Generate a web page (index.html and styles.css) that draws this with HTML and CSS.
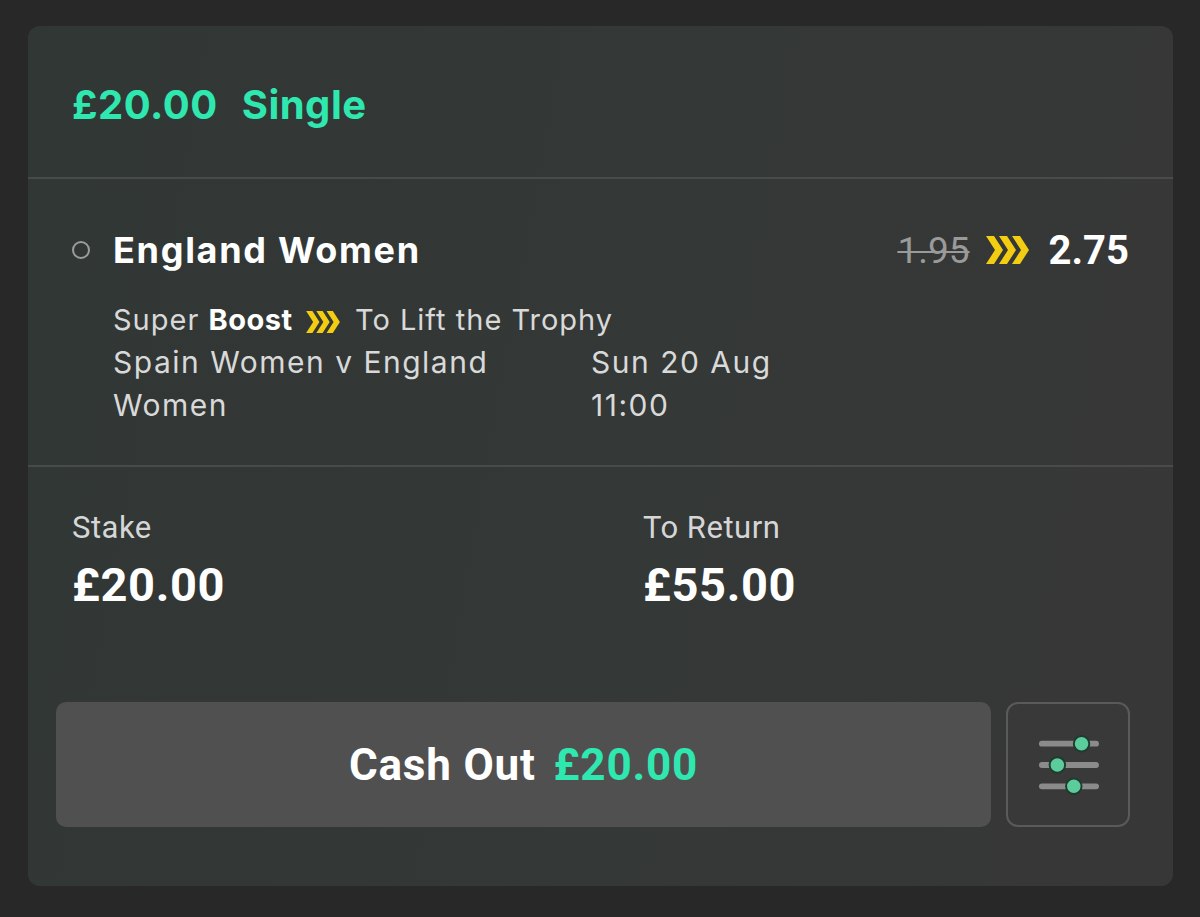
FILE: index.html
```html
<!DOCTYPE html>
<html lang="en">
<head>
<meta charset="utf-8">
<title>Bet</title>
<link rel="stylesheet" href="styles.css">
</head>
<body>
<div class="card">
  <div class="head">
    <span class="head-amount">£20.00</span>
    <span class="head-type">Single</span>
  </div>
  <div class="selection">
    <div class="sel-row">
      <span class="ring"></span>
      <span class="sel-name">England Women</span>
      <span class="odds">
        <span class="odds-old">1.95</span>
        <svg class="chev chev-lg" viewBox="0 0 43 28" aria-hidden="true">
          <polygon points="0,0 8,0 17,14 8,28 0,28 9,14"/>
          <polygon points="13,0 21,0 30,14 21,28 13,28 22,14"/>
          <polygon points="26,0 34,0 43,14 34,28 26,28 35,14"/>
        </svg>
        <span class="odds-new">2.75</span>
      </span>
    </div>
    <div class="details">
      <div class="boost">Super <b>Boost</b>
        <svg class="chev chev-sm" viewBox="0 0 43 28" aria-hidden="true">
          <polygon points="0,0 8,0 17,14 8,28 0,28 9,14"/>
          <polygon points="13,0 21,0 30,14 21,28 13,28 22,14"/>
          <polygon points="26,0 34,0 43,14 34,28 26,28 35,14"/>
        </svg>
        To Lift the Trophy</div>
      <div class="event">
        <div class="event-name">Spain Women v England Women</div>
        <div class="event-time">Sun 20 Aug<br>11:00</div>
      </div>
    </div>
  </div>
  <div class="totals">
    <div class="total">
      <div class="total-label">Stake</div>
      <div class="total-value">£20.00</div>
    </div>
    <div class="total">
      <div class="total-label">To Return</div>
      <div class="total-value">£55.00</div>
    </div>
  </div>
  <div class="actions">
    <button class="cashout">Cash Out <span class="cashout-amt">£20.00</span></button>
    <button class="settings" aria-label="Settings">
      <svg viewBox="0 0 124 124" width="124" height="124" aria-hidden="true">
        <g stroke="#8b8b8b" stroke-width="6" stroke-linecap="round">
          <line x1="35" y1="40" x2="91" y2="40"/>
          <line x1="35" y1="62" x2="91" y2="62"/>
          <line x1="35" y1="84" x2="91" y2="84"/>
        </g>
        <g fill="#5ccc9c" stroke="#1f3a2e" stroke-width="2">
          <circle cx="76" cy="40" r="8"/>
          <circle cx="51" cy="62" r="8"/>
          <circle cx="68" cy="84" r="8"/>
        </g>
      </svg>
    </button>
  </div>
</div>
</body>
</html>
```

FILE: styles.css
```css
* { box-sizing: border-box; }
html, body { margin: 0; padding: 0; }
body {
  background: #282828;
  font-family: "Inter", "Roboto", "Liberation Sans", sans-serif;
  width: 1200px;
  height: 917px;
  overflow: hidden;
}
.card {
  margin: 26px 27px 0 28px;
  height: 860px;
  border-radius: 12px;
  background: linear-gradient(100deg, #313735 0%, #343836 55%, #373737 100%);
  display: flex;
  flex-direction: column;
}
.head {
  height: 151px;
  display: flex;
  align-items: center;
  padding: 6px 44px 0;
  color: #2fe8b0;
  font-family: "Inter", sans-serif;
  font-weight: 700;
  font-size: 40px;
  letter-spacing: 0.5px;
  gap: 24px;
}
.selection {
  border-top: 2px solid #474c4a;
  border-bottom: 2px solid #474c4a;
  padding: 49px 44px 38px;
}
.sel-row {
  display: flex;
  align-items: center;
  height: 44px;
}
.ring {
  width: 18px;
  height: 18px;
  border: 2px solid #9c9c9c;
  border-radius: 50%;
  margin-right: 23px;
  flex: none;
}
.sel-name {
  color: #fff;
  font-family: "Inter", sans-serif;
  font-weight: 700;
  font-size: 36px;
  letter-spacing: 1.7px;
  flex: 1;
}
.odds {
  display: flex;
  align-items: center;
  gap: 16px;
  font-family: "Roboto", sans-serif;
}
.odds-old {
  color: #9a9a9a;
  font-size: 37px;
  text-decoration: line-through;
  text-decoration-thickness: 2px;
}
.odds-new {
  color: #fff;
  font-weight: 700;
  font-size: 40px;
  margin-left: 4px;
}
.chev polygon { fill: #f2cd12; }
.chev-lg { width: 43px; height: 28px; }
.chev-sm { width: 34px; height: 22px; vertical-align: -3px; margin: 0 6px 0 4px; }
.details {
  margin-left: 41px;
  margin-top: 26px;
  color: #d9d9d9;
  font-family: "Inter", sans-serif;
  font-size: 30px;
  letter-spacing: 1.5px;
  line-height: 43px;
}
.boost {
  font-size: 29px;
  letter-spacing: 1px;
}
.boost b { color: #fff; font-weight: 700; letter-spacing: 0.5px; }
.event {
  display: grid;
  grid-template-columns: 478px auto;
}
.event-name { width: 420px; }
.totals {
  display: grid;
  grid-template-columns: 571px auto;
  padding: 43px 44px 0;
  height: 235px;
  font-family: "Roboto", sans-serif;
}
.total-label {
  color: #d6d6d6;
  font-size: 31px;
  letter-spacing: 0.5px;
  line-height: 36px;
}
.total-value {
  color: #fff;
  font-weight: 700;
  font-size: 47px;
  letter-spacing: 0.6px;
  line-height: 50px;
  margin-top: 14px;
}
.actions {
  display: flex;
  gap: 15px;
  padding: 0 43px 0 28px;
}
.cashout {
  flex: 1;
  height: 125px;
  border: none;
  border-radius: 10px;
  background: #505050;
  color: #fff;
  font-family: "Roboto", sans-serif;
  font-weight: 700;
  font-size: 44px;
  letter-spacing: 0.8px;
  padding: 0;
}
.cashout-amt { color: #2fe8b0; margin-left: 6px; }
.settings {
  width: 124px;
  height: 125px;
  flex: none;
  padding: 0;
  border: 2px solid #5a5a5a;
  border-radius: 12px;
  background: #393939;
  display: flex;
  align-items: center;
  justify-content: center;
}
.settings svg { display: block; }
```
